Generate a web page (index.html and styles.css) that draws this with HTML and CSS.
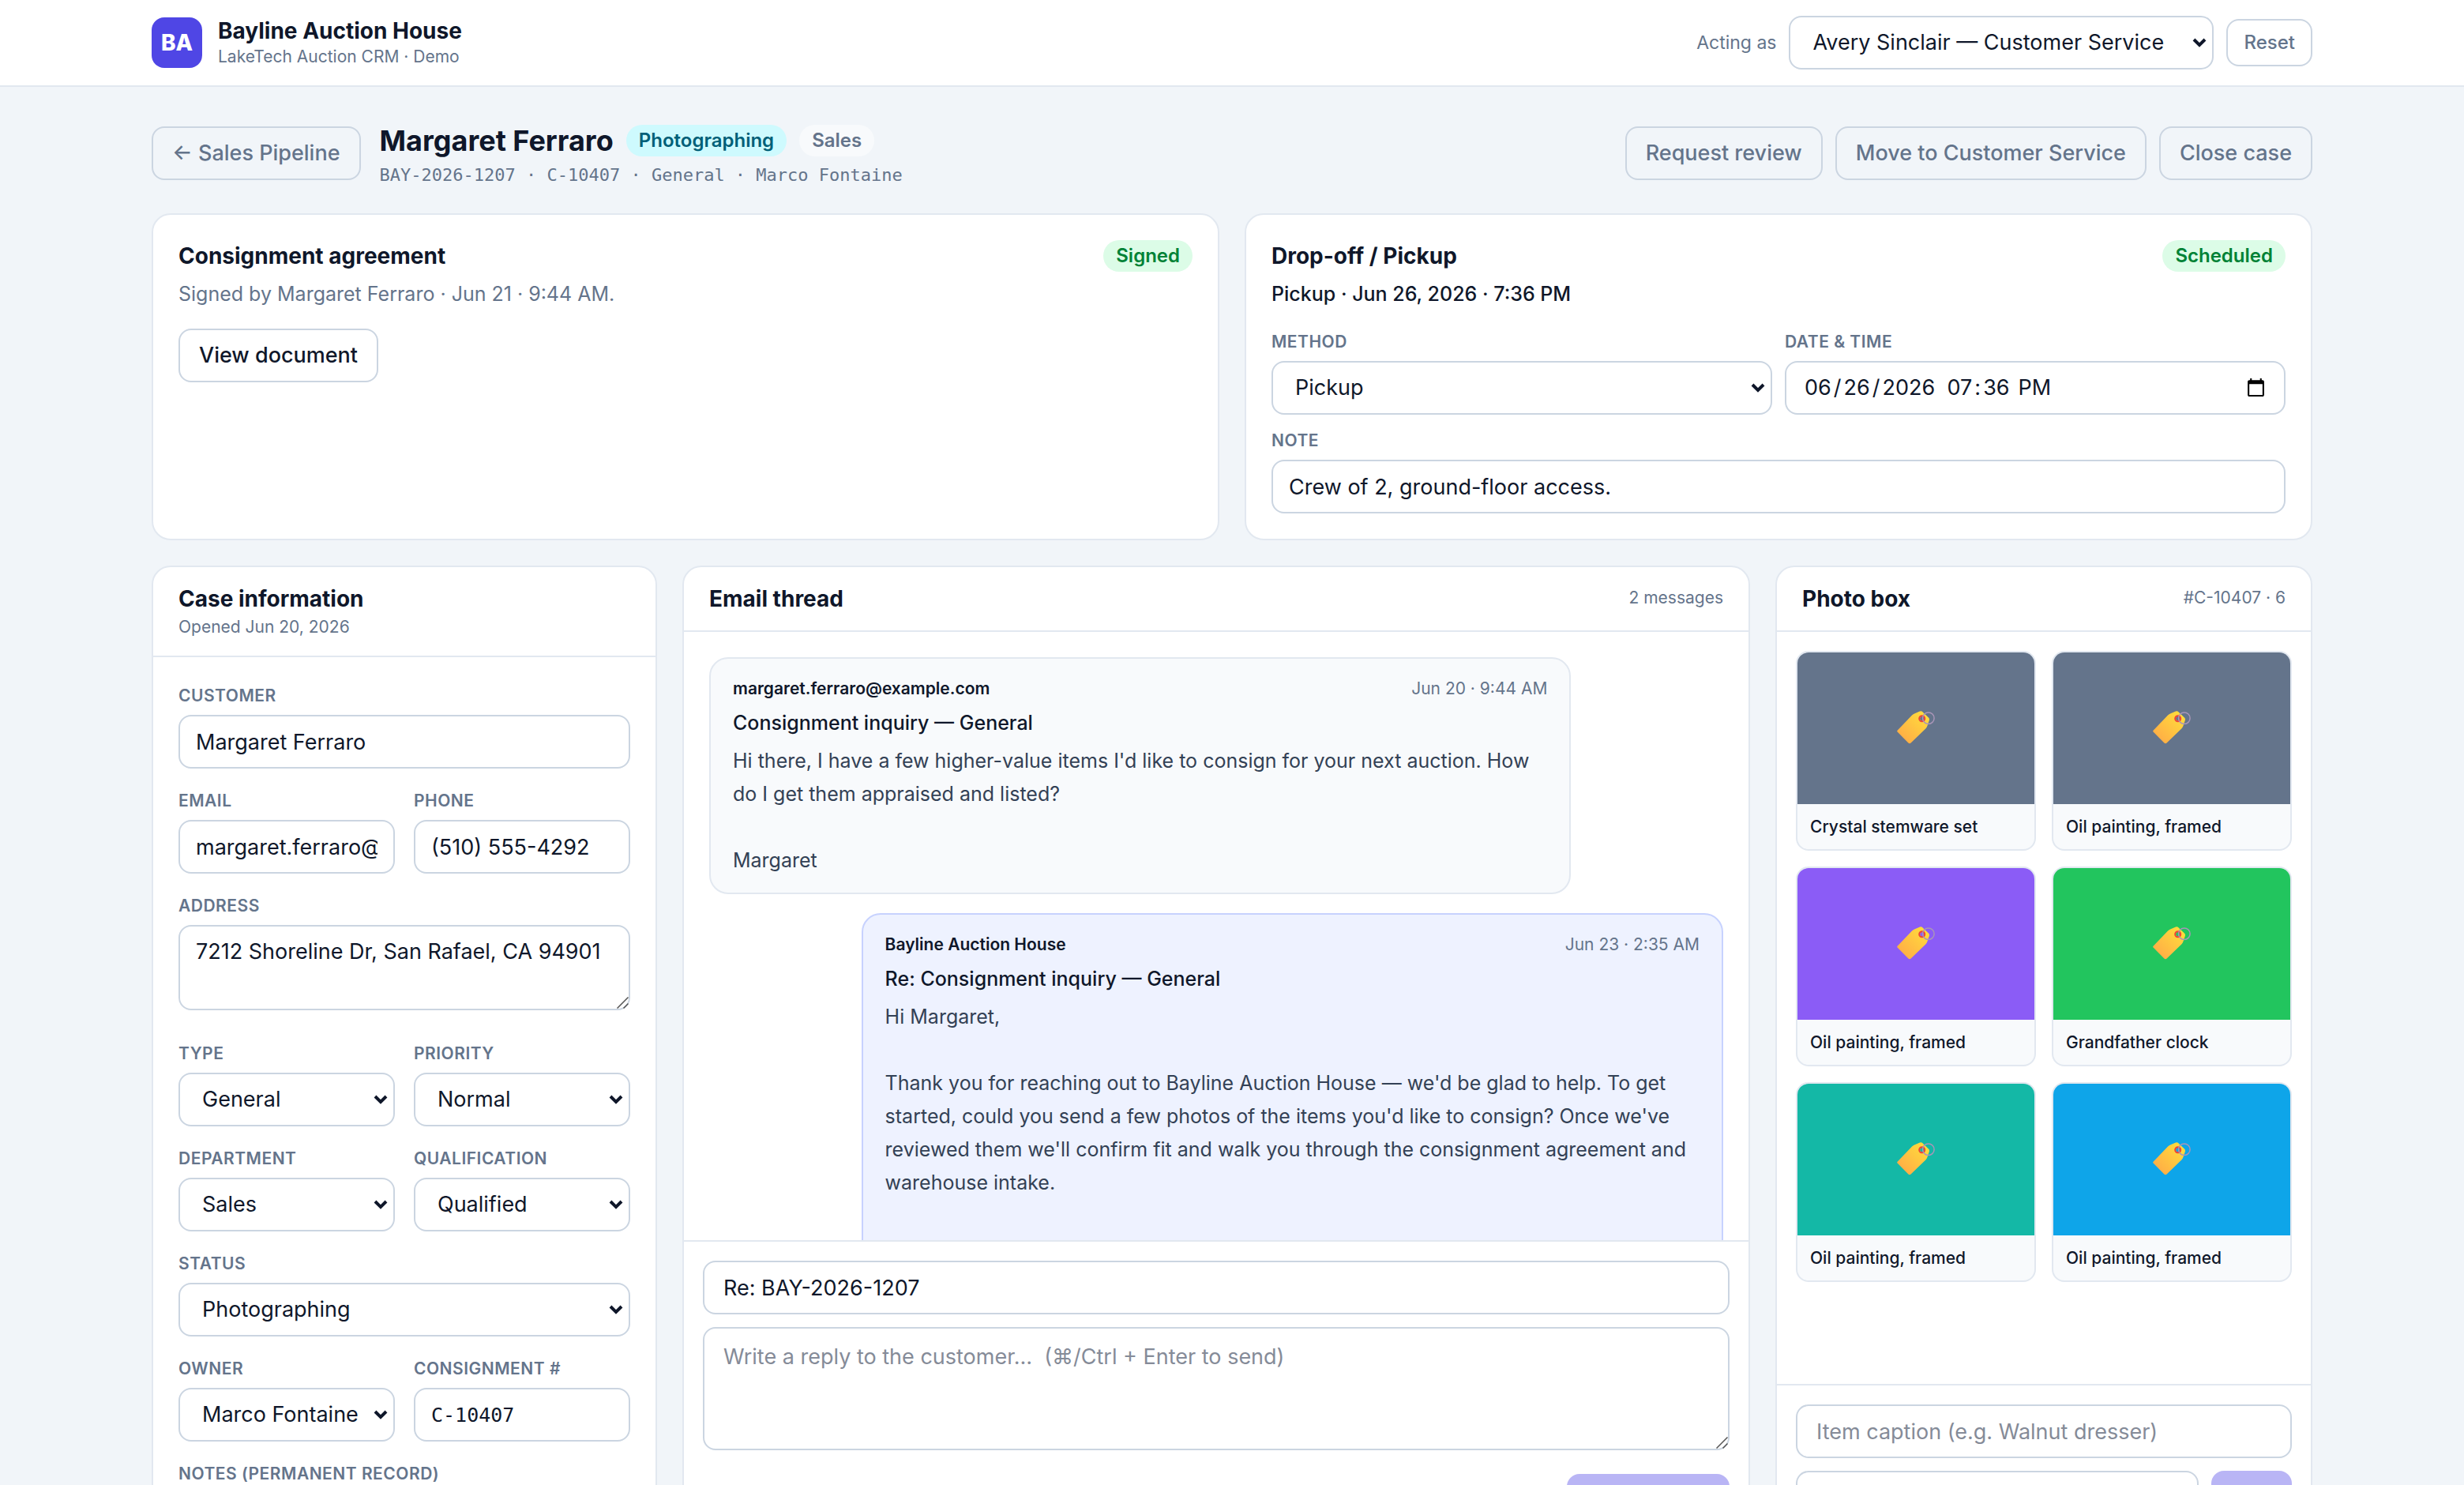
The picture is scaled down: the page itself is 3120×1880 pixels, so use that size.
FILE: index.html
```html
<!DOCTYPE html>
<html lang="en">
<head>
  <meta charset="UTF-8">
  <meta name="viewport" content="width=device-width, initial-scale=1.0">
  <title>Margaret Ferraro · Bayline Auction House</title>
  <link rel="stylesheet" href="styles.css">
</head>
<body>
  <!-- Shared tag icon -->
  <svg class="sprite" aria-hidden="true">
    <defs>
      <linearGradient id="tag-fill" x1="0" y1="1" x2="1" y2="0">
        <stop offset="0" stop-color="#ffa548"/>
        <stop offset="1" stop-color="#ffe23a"/>
      </linearGradient>
    </defs>
    <symbol id="tag" viewBox="0 0 48 48">
      <path fill="url(#tag-fill)" fill-rule="evenodd" d="M.8 26.500 19 7.500Q20.500 6 22.500 5.200L29 2.500Q31 1.800 32.400 3.200L40 10.500Q41.400 12 40.800 14L38.600 20.500Q38 22.600 36.500 24.200L17.600 42.500Q16 44 14.400 42.500L.8 28.800Q-.4 27.600 .8 26.500ZM31.700 9a2.700 2.700 0 1 0 .1 0Z"/>
      <circle cx="31.700" cy="11.700" r="3.500" fill="none" stroke="#ee4438" stroke-width="2"/>
      <circle cx="39.800" cy="11.200" r="7.300" fill="none" stroke="#a995b8" stroke-width="1.500"/>
    </symbol>
  </svg>

  <header class="topbar">
    <div class="container topbar-inner">
      <div class="logo">BA</div>
      <div class="brand">
        <p class="brand-name">Bayline Auction House</p>
        <p class="brand-sub">LakeTech Auction CRM · Demo</p>
      </div>
      <div class="session">
        <label for="acting-as">Acting as</label>
        <select id="acting-as" class="control user-select">
          <option>Avery Sinclair — Customer Service</option>
        </select>
        <button type="button" class="btn btn-small">Reset</button>
      </div>
    </div>
  </header>

  <main class="container">
    <div class="page-head">
      <button type="button" class="btn">← Sales Pipeline</button>
      <div class="page-title">
        <div class="title-row">
          <h1>Margaret Ferraro</h1>
          <span class="pill pill-cyan">Photographing</span>
          <span class="pill pill-gray">Sales</span>
        </div>
        <p class="case-ref">BAY-2026-1207 · C-10407 · General · Marco Fontaine</p>
      </div>
      <div class="actions">
        <button type="button" class="btn">Request review</button>
        <button type="button" class="btn">Move to Customer Service</button>
        <button type="button" class="btn">Close case</button>
      </div>
    </div>

    <div class="summary">
      <section class="card summary-card">
        <div class="card-row">
          <h2>Consignment agreement</h2>
          <span class="pill pill-green">Signed</span>
        </div>
        <p class="summary-text muted">Signed by Margaret Ferraro · Jun 21 · 9:44 AM.</p>
        <button type="button" class="btn btn-solid">View document</button>
      </section>

      <section class="card summary-card">
        <div class="card-row">
          <h2>Drop-off / Pickup</h2>
          <span class="pill pill-green">Scheduled</span>
        </div>
        <p class="summary-text strong">Pickup · Jun 26, 2026 · 7:36 PM</p>
        <div class="delivery-grid">
          <div class="field">
            <label for="method">Method</label>
            <select id="method" class="control"><option>Pickup</option></select>
          </div>
          <div class="field">
            <label for="when">Date &amp; time</label>
            <input id="when" class="control" type="datetime-local" value="2026-06-26T19:36">
          </div>
          <div class="field wide">
            <label for="note">Note</label>
            <input id="note" class="control" type="text" value="Crew of 2, ground-floor access.">
          </div>
        </div>
      </section>
    </div>

    <div class="columns">
      <!-- Case details -->
      <section class="card column">
        <div class="column-head">
          <div>
            <h2>Case information</h2>
            <p class="small">Opened Jun 20, 2026</p>
          </div>
        </div>
        <form class="case-form">
          <div class="field wide">
            <label for="customer">Customer</label>
            <input id="customer" class="control" type="text" value="Margaret Ferraro">
          </div>
          <div class="field">
            <label for="email">Email</label>
            <input id="email" class="control" type="text" value="margaret.ferraro@example.com">
          </div>
          <div class="field">
            <label for="phone">Phone</label>
            <input id="phone" class="control" type="text" value="(510) 555-4292">
          </div>
          <div class="field wide">
            <label for="address">Address</label>
            <textarea id="address" class="control" rows="2">7212 Shoreline Dr, San Rafael, CA 94901</textarea>
          </div>
          <div class="field">
            <label for="type">Type</label>
            <select id="type" class="control"><option>General</option></select>
          </div>
          <div class="field">
            <label for="priority">Priority</label>
            <select id="priority" class="control"><option>Normal</option></select>
          </div>
          <div class="field">
            <label for="department">Department</label>
            <select id="department" class="control"><option>Sales</option></select>
          </div>
          <div class="field">
            <label for="qualification">Qualification</label>
            <select id="qualification" class="control"><option>Qualified</option></select>
          </div>
          <div class="field wide">
            <label for="status">Status</label>
            <select id="status" class="control"><option>Photographing</option></select>
          </div>
          <div class="field">
            <label for="owner">Owner</label>
            <select id="owner" class="control"><option>Marco Fontaine</option></select>
          </div>
          <div class="field">
            <label for="consignment">Consignment #</label>
            <input id="consignment" class="control mono" type="text" value="C-10407">
          </div>
          <div class="field wide">
            <label for="notes">Notes (permanent record)</label>
            <textarea id="notes" class="control" rows="3"></textarea>
          </div>
        </form>
      </section>

      <!-- Email thread -->
      <section class="card column">
        <div class="column-head">
          <h2>Email thread</h2>
          <p class="small">2 messages</p>
        </div>
        <div class="thread">
          <article class="message">
            <div class="message-meta">
              <span class="sender">margaret.ferraro@example.com</span>
              <time>Jun 20 · 9:44 AM</time>
            </div>
            <h3>Consignment inquiry — General</h3>
            <p class="message-body">Hi there, I have a few higher-value items I'd like to consign for your next auction. How do I get them appraised and listed?

Margaret</p>
          </article>
          <article class="message outgoing">
            <div class="message-meta">
              <span class="sender">Bayline Auction House</span>
              <time>Jun 23 · 2:35 AM</time>
            </div>
            <h3>Re: Consignment inquiry — General</h3>
            <p class="message-body">Hi Margaret,

Thank you for reaching out to Bayline Auction House — we'd be glad to help. To get started, could you send a few photos of the items you'd like to consign? Once we've reviewed them we'll confirm fit and walk you through the consignment agreement and warehouse intake.

Bayline Auction House</p>
          </article>
        </div>
        <form class="column-foot">
          <input class="control" type="text" aria-label="Subject" value="Re: BAY-2026-1207">
          <textarea class="control" rows="3" aria-label="Reply" placeholder="Write a reply to the customer…  (⌘/Ctrl + Enter to send)"></textarea>
          <button type="button" class="btn-primary send" disabled>Send reply</button>
        </form>
      </section>

      <!-- Photos -->
      <section class="card column">
        <div class="column-head">
          <h2>Photo box</h2>
          <p class="small">#C-10407 · 6</p>
        </div>
        <div class="photos">
          <figure class="photo">
            <div class="thumb slate"><svg><use href="#tag"/></svg></div>
            <figcaption>Crystal stemware set</figcaption>
          </figure>
          <figure class="photo">
            <div class="thumb slate"><svg><use href="#tag"/></svg></div>
            <figcaption>Oil painting, framed</figcaption>
          </figure>
          <figure class="photo">
            <div class="thumb violet"><svg><use href="#tag"/></svg></div>
            <figcaption>Oil painting, framed</figcaption>
          </figure>
          <figure class="photo">
            <div class="thumb green"><svg><use href="#tag"/></svg></div>
            <figcaption>Grandfather clock</figcaption>
          </figure>
          <figure class="photo">
            <div class="thumb teal"><svg><use href="#tag"/></svg></div>
            <figcaption>Oil painting, framed</figcaption>
          </figure>
          <figure class="photo">
            <div class="thumb sky"><svg><use href="#tag"/></svg></div>
            <figcaption>Oil painting, framed</figcaption>
          </figure>
        </div>
        <form class="column-foot">
          <input class="control" type="text" aria-label="Item caption" placeholder="Item caption (e.g. Walnut dresser)">
          <div class="upload">
            <input class="control" type="text" aria-label="Photo">
            <button type="button" class="btn-primary" disabled>Add</button>
          </div>
        </form>
      </section>
    </div>
  </main>
</body>
</html>
```
FILE: styles.css
```css
* { box-sizing: border-box; margin: 0; padding: 0; }

body {
  font-family: Inter, "Liberation Sans", sans-serif;
  font-size: 27px;
  line-height: 40px;
  color: #0f172a;
  background: #f1f5f9;
}

button, input, select, textarea {
  font: inherit;
  color: inherit;
}

.sprite {
  position: absolute;
  width: 0;
  height: 0;
}

.container {
  max-width: 2800px;
  margin: 0 auto;
  padding: 0 32px;
}

/* Top bar */
.topbar {
  background: #fff;
  border-bottom: 2px solid #e2e8f0;
}

.topbar-inner {
  display: flex;
  align-items: center;
  gap: 20px;
  padding-top: 20px;
  padding-bottom: 20px;
}

.logo {
  display: flex;
  align-items: center;
  justify-content: center;
  width: 64px;
  height: 64px;
  border-radius: 16px;
  background: #4f46e5;
  color: #fff;
  font-size: 28px;
  font-weight: 800;
}

.brand-name {
  font-size: 28px;
  font-weight: 700;
  line-height: 36px;
}

.brand-sub {
  font-size: 21px;
  line-height: 30px;
  color: #64748b;
}

.session {
  display: flex;
  align-items: center;
  gap: 16px;
  margin-left: auto;
  font-size: 23px;
  color: #64748b;
}

/* Buttons and form controls */
.btn {
  height: 68px;
  padding: 0 24px;
  border: 2px solid #cbd5e1;
  border-radius: 16px;
  background: transparent;
  color: #64748b;
  font-weight: 500;
  white-space: nowrap;
  cursor: pointer;
}

.btn-small {
  height: 60px;
  padding: 0 20px;
  font-size: 24px;
}

.btn-solid {
  background: #fff;
  color: #0f172a;
}

.btn-primary {
  height: 68px;
  padding: 0 28px;
  border: none;
  border-radius: 16px;
  background: #4f46e5;
  color: #fff;
  font-weight: 500;
}

.btn-primary:disabled {
  opacity: 0.4;
}

.control {
  display: block;
  width: 100%;
  height: 68px;
  padding: 12px 20px;
  border: 2px solid #cbd5e1;
  border-radius: 16px;
  background: #fff;
  font-size: 27px;
}

.control::placeholder {
  color: #858b98;
}

select.control {
  appearance: none;
  padding: 0 44px 0 28px;
  background: #fff url("data:image/svg+xml,%3Csvg xmlns='http://www.w3.org/2000/svg' viewBox='0 0 18 14'%3E%3Cpath d='M2 3l7 7 7-7' fill='none' stroke='%230f172a' stroke-width='4'/%3E%3C/svg%3E") no-repeat right 7px center / 18px 14px;
}

select.user-select {
  width: 538px;
  color: #0f172a;
}

textarea.control {
  height: auto;
  margin-bottom: 14px;
  line-height: 40px;
}

textarea::-webkit-scrollbar {
  width: 20px;
  height: 20px;
}

textarea::-webkit-resizer {
  background: url("data:image/svg+xml,%3Csvg xmlns='http://www.w3.org/2000/svg' viewBox='0 0 20 20'%3E%3Cpath d='M3 17L17 3M11 17l6-6' fill='none' stroke='%23555' stroke-width='1.500'/%3E%3C/svg%3E") no-repeat center / 20px 20px;
}

/* Date and time sit apart, with no comma between them */
input::-webkit-datetime-edit-month-field,
input::-webkit-datetime-edit-day-field,
input::-webkit-datetime-edit-year-field,
input::-webkit-datetime-edit-minute-field,
input::-webkit-datetime-edit-ampm-field {
  padding: 0 3px;
}

input::-webkit-datetime-edit-hour-field {
  margin-left: -16px;
  padding: 0 3px 0 13px;
  background: #fff;
}

.mono {
  font-family: "DejaVu Sans Mono", monospace;
  font-size: 25px;
}

.field label {
  display: block;
  margin-bottom: 8px;
  font-size: 21px;
  font-weight: 600;
  line-height: 33px;
  letter-spacing: 0.5px;
  text-transform: uppercase;
  color: #64748b;
}

.wide {
  grid-column: 1 / -1;
}

/* Page heading */
.page-head {
  display: flex;
  align-items: center;
  gap: 24px;
  padding: 40px 0 32px;
}

.title-row {
  display: flex;
  align-items: center;
  gap: 16px;
}

h1 {
  font-size: 36px;
  font-weight: 700;
  line-height: 56px;
}

h2 {
  font-size: 28px;
  font-weight: 700;
  line-height: 40px;
}

.pill {
  padding: 0 16px;
  border-radius: 20px;
  font-size: 24px;
  font-weight: 600;
  line-height: 40px;
}

.pill-cyan { background: #cefafe; color: #005f78; }
.pill-gray { background: #f8fafc; color: #64748b; }
.pill-green { background: #dcfce7; color: #008236; }

.case-ref {
  font-family: "DejaVu Sans Mono", monospace;
  font-size: 22px;
  line-height: 32px;
  color: #64748b;
}

.actions {
  display: flex;
  gap: 16px;
  margin-left: auto;
}

/* Cards */
.card {
  border: 2px solid #e2e8f0;
  border-radius: 24px;
  background: #fff;
}

.summary {
  display: grid;
  grid-template-columns: 1fr 1fr;
  gap: 32px;
  margin-bottom: 32px;
}

.summary-card {
  padding: 32px;
}

.card-row {
  display: flex;
  justify-content: space-between;
}

.summary-text {
  margin: 8px 0 24px;
  font-size: 25px;
}

.muted { color: #64748b; }
.strong { font-weight: 500; }

.delivery-grid {
  display: grid;
  grid-template-columns: 1fr 1fr;
  gap: 16px;
}

.columns {
  display: grid;
  grid-template-columns: 640px 1fr 680px;
  gap: 32px;
  height: 1244px;
  margin-bottom: 48px;
}

.column {
  display: flex;
  flex-direction: column;
  min-height: 0;
  overflow: hidden;
}

.column-head {
  display: flex;
  justify-content: space-between;
  padding: 20px 32px;
  border-bottom: 2px solid #e2e8f0;
}

.small {
  font-size: 21px;
  line-height: 32px;
  color: #64748b;
}

.column-head > .small {
  line-height: 38px;
}

.case-form {
  display: grid;
  grid-template-columns: 1fr 1fr;
  gap: 24px;
  padding: 32px;
  overflow-y: auto;
  scrollbar-width: none;
}

/* Thread */
.thread {
  display: flex;
  flex: 1;
  flex-direction: column;
  gap: 24px;
  min-height: 0;
  padding: 32px;
  overflow-y: auto;
  scrollbar-width: none;
}

.message {
  flex-shrink: 0;
  width: 85%;
  padding: 20px 28px;
  border: 2px solid #e2e8f0;
  border-radius: 24px;
  background: #f8fafc;
}

.outgoing {
  align-self: flex-end;
  border-color: #c7d2fe;
  background: #eef2ff;
}

.message-meta {
  display: flex;
  justify-content: space-between;
  margin-bottom: 4px;
  font-size: 21px;
  line-height: 36px;
  color: #64748b;
}

.sender {
  font-weight: 600;
  color: #0f172a;
}

h3 {
  margin-bottom: 6px;
  font-size: 25px;
  font-weight: 500;
  line-height: 42px;
}

.message-body {
  font-size: 25px;
  line-height: 42px;
  color: #334155;
  white-space: pre-wrap;
}

.column-foot {
  display: flex;
  flex-direction: column;
  gap: 16px;
  padding: 24px;
  border-top: 2px solid #e2e8f0;
}

.column-foot .control {
  padding-left: 24px;
  padding-right: 24px;
}

.column-foot textarea {
  padding-top: 16px;
  padding-bottom: 16px;
}

.send {
  align-self: flex-end;
  width: 206px;
}

/* Photos */
.photos {
  display: grid;
  flex: 1;
  grid-template-columns: 1fr 1fr;
  align-content: start;
  gap: 20px;
  min-height: 0;
  padding: 24px;
  overflow-y: auto;
}

.photo {
  border: 2px solid #e2e8f0;
  border-radius: 16px;
  background: #f8fafc;
  overflow: hidden;
}

.thumb {
  display: flex;
  align-items: center;
  justify-content: center;
  height: 192px;
}

.thumb svg {
  width: 48px;
  height: 48px;
}

.slate { background: #64748b; }
.violet { background: #8b5cf6; }
.green { background: #22c55e; }
.teal { background: #14b8a6; }
.sky { background: #0ea5e9; }

figcaption {
  padding: 12px 16px;
  font-size: 21px;
  font-weight: 500;
  line-height: 33px;
}

.upload {
  display: flex;
  gap: 16px;
}

.upload .control,
.upload .btn-primary {
  height: 72px;
}

.upload .btn-primary {
  flex: 0 0 102px;
  padding: 0;
}
```
